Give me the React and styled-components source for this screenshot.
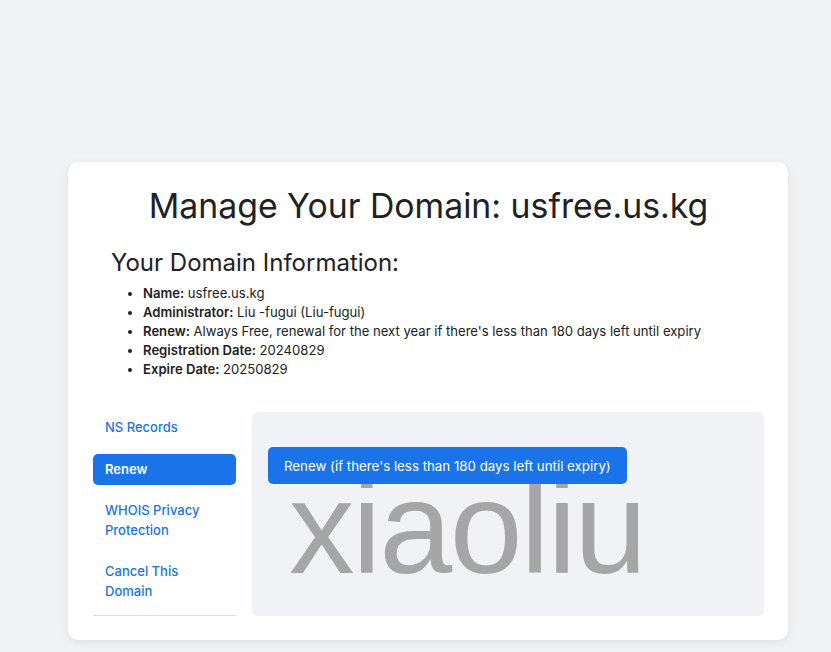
import React from 'react'
import styled, { createGlobalStyle } from 'styled-components'

const GlobalStyle = createGlobalStyle`
  * {
    box-sizing: border-box;
  }
  body {
    margin: 0;
    background: #f1f2f4;
    font-family: Inter, "Noto Sans", sans-serif;
    color: #202124;
  }
`

const info = [
  { label: 'Name:', value: 'usfree.us.kg' },
  { label: 'Administrator:', value: 'Liu -fugui (Liu-fugui)' },
  {
    label: 'Renew:',
    value: "Always Free, renewal for the next year if there's less than 180 days left until expiry",
  },
  { label: 'Registration Date:', value: '20240829' },
  { label: 'Expire Date:', value: '20250829' },
]

const tabs = [
  { id: 'ns', text: 'NS Records' },
  { id: 'renew', text: 'Renew' },
  { id: 'whois', text: 'WHOIS Privacy Protection' },
  { id: 'cancel', text: 'Cancel This Domain' },
]

const App = () => {
  const active = 'renew'

  return (
    <>
      <GlobalStyle />
      <Page>
        <Card>
          <Title>Manage Your Domain: usfree.us.kg</Title>
          <InfoSection>
            <SubTitle>Your Domain Information:</SubTitle>
            <InfoList>
              {info.map(item => (
                <li key={item.label}>
                  <strong>{item.label}</strong> {item.value}
                </li>
              ))}
            </InfoList>
          </InfoSection>
          <Manage>
            <SideNav>
              {tabs.map(tab => (
                <NavItem key={tab.id} $active={tab.id === active}>
                  {tab.text}
                </NavItem>
              ))}
            </SideNav>
            <Panel>
              <Watermark>xiaoliu</Watermark>
              <RenewButton>Renew (if there's less than 180 days left until expiry)</RenewButton>
            </Panel>
          </Manage>
        </Card>
      </Page>
    </>
  )
}

export default App

const Page = styled.div`
  min-height: 652px;
  padding: 162px 0 0 68px;
`

const Card = styled.div`
  width: 720px;
  background: #fff;
  border-radius: 10px;
  box-shadow: 0 2px 8px rgba(0, 0, 0, 0.08);
  padding: 22px 24px 24px 25px;
`

const Title = styled.h1`
  margin: 0;
  text-align: center;
  font-size: 33.8px;
  font-weight: 400;
  line-height: 44px;
  color: #202124;
`

const InfoSection = styled.div`
  padding: 19px 0 0 18px;
`

const SubTitle = styled.h2`
  margin: 0;
  font-size: 24px;
  font-weight: 400;
  line-height: 32px;
  color: #202124;
`

const InfoList = styled.ul`
  margin: 5px 0 0;
  padding-left: 32px;
  font-size: 13.1px;
  line-height: 19px;
  color: #202124;

  strong {
    font-weight: 600;
  }
`

const Manage = styled.div`
  display: flex;
  gap: 16px;
  margin-top: 33px;
`

const SideNav = styled.nav`
  width: 143px;
  flex-shrink: 0;
  display: flex;
  flex-direction: column;
  gap: 10px;
  padding-bottom: 8px;
  border-bottom: 1px solid #dcdcdc;
`

const NavItem = styled.div`
  padding: 6px 12px;
  border-radius: 5px;
  font-size: 13px;
  line-height: 19.5px;
  font-weight: ${p => (p.$active ? 600 : 500)};
  color: ${p => (p.$active ? '#fff' : '#1a73e8')};
  background: ${p => (p.$active ? '#1a73e8' : 'transparent')};
`

const Panel = styled.div`
  position: relative;
  flex: 1;
  background: #f0f2f5;
  border-radius: 6px;
  padding: 35px 16px;
  overflow: hidden;
`

const Watermark = styled.div`
  position: absolute;
  left: 37px;
  top: 50px;
  font-family: "Liberation Sans", Arial, sans-serif;
  font-size: 131px;
  line-height: 131px;
  letter-spacing: -2.2px;
  color: #a6a6a6;
  pointer-events: none;
`

const RenewButton = styled.button`
  position: relative;
  z-index: 1;
  display: block;
  height: 37px;
  padding: 0 16px;
  border: none;
  border-radius: 5px;
  background: #1a73e8;
  color: #fff;
  font-family: Inter, "Noto Sans", sans-serif;
  font-size: 13.3px;
  cursor: pointer;
`
